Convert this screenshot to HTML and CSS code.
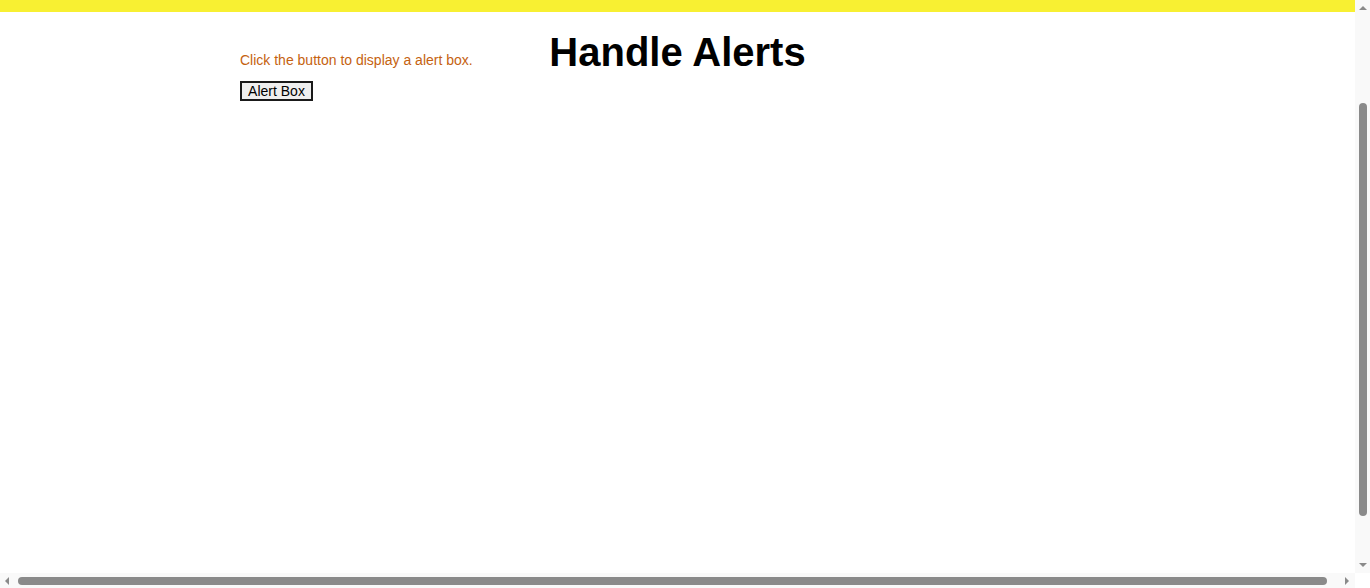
FILE: index.html
```html
<!DOCTYPE html>
<html>
<head>
<meta charset="utf-8">
<title>Handle Alerts</title>
<link rel="stylesheet" href="styles.css">
</head>
<body>
<div class="frame">
  <div class="viewport">
    <div class="page">
      <div class="topbar"></div>
      <div class="content">
        <div class="intro">
          <p class="hint">Click the button to display a alert box.</p>
          <button class="alert-btn" type="button">Alert Box</button>
        </div>
        <h1 class="title">Handle Alerts</h1>
      </div>
    </div>
    <div class="vscroll">
      <span class="arrow up"></span>
      <div class="vtrack"><div class="vthumb"></div></div>
      <span class="arrow down"></span>
    </div>
  </div>
  <div class="hbar">
    <div class="hscroll">
      <span class="arrow left"></span>
      <div class="htrack"><div class="hthumb"></div></div>
      <span class="arrow right"></span>
    </div>
    <div class="corner"></div>
  </div>
</div>
</body>
</html>
```
FILE: styles.css
```css
html, body {
  margin: 0;
  padding: 0;
  width: 1370px;
  height: 588px;
  overflow: hidden;
  background: #ffffff;
  font-family: "Liberation Sans", Arial, sans-serif;
}

.frame {
  display: flex;
  flex-direction: column;
  width: 1370px;
  height: 588px;
}

.viewport {
  display: flex;
  flex: 1;
  min-height: 0;
}

.page {
  flex: 1;
  min-width: 0;
  display: flex;
  flex-direction: column;
}

.topbar {
  height: 12px;
  background: #f8f032;
}

.content {
  display: grid;
  grid-template-areas: "stack";
}

.intro {
  grid-area: stack;
  padding-left: 240px;
  padding-top: 40px;
  display: flex;
  flex-direction: column;
  align-items: flex-start;
}

.hint {
  margin: 0;
  font-size: 14px;
  line-height: 16px;
  color: #c5620f;
}

.alert-btn {
  margin-top: 13px;
  font-family: "Liberation Sans", Arial, sans-serif;
  font-size: 14px;
  line-height: 15px;
  padding: 1px 0;
  height: 20px;
  width: 73px;
  color: #000;
  background: #efefef;
  border: 2px solid #1a1a1a;
  border-radius: 0;
}

.title {
  grid-area: stack;
  margin: 17px 0 0;
  text-align: center;
  font-size: 40px;
  line-height: 46px;
  font-weight: bold;
  color: #000;
}

.vscroll {
  width: 15px;
  background: #f9f9f9;
  display: flex;
  flex-direction: column;
  align-items: center;
}

.vtrack {
  flex: 1;
  width: 100%;
  display: flex;
  flex-direction: column;
  align-items: center;
  padding-top: 93px;
  box-sizing: border-box;
}

.vthumb {
  width: 8px;
  height: 413px;
  background: #8a8a8a;
  border-radius: 4px;
}

.hbar {
  display: flex;
  height: 15px;
}

.hscroll {
  flex: 1;
  display: flex;
  align-items: center;
  background: #f9f9f9;
}

.htrack {
  flex: 1;
  display: flex;
  align-items: center;
  padding-left: 9px;
}

.hthumb {
  width: 1309px;
  height: 8px;
  background: #8a8a8a;
  border-radius: 4px;
}

.corner {
  width: 15px;
  background: #ffffff;
}

.arrow {
  width: 0;
  height: 0;
  display: block;
}

.arrow.up {
  margin: 6px 0 0;
  border-left: 4px solid transparent;
  border-right: 4px solid transparent;
  border-bottom: 4px solid #8a8a8a;
}

.arrow.down {
  margin: 0 0 6px;
  border-left: 4px solid transparent;
  border-right: 4px solid transparent;
  border-top: 4px solid #8a8a8a;
}

.arrow.left {
  margin-left: 5px;
  border-top: 4px solid transparent;
  border-bottom: 4px solid transparent;
  border-right: 4px solid #8a8a8a;
}

.arrow.right {
  margin-right: 6px;
  margin-left: 18px;
  border-top: 4px solid transparent;
  border-bottom: 4px solid transparent;
  border-left: 4px solid #8a8a8a;
}
```
